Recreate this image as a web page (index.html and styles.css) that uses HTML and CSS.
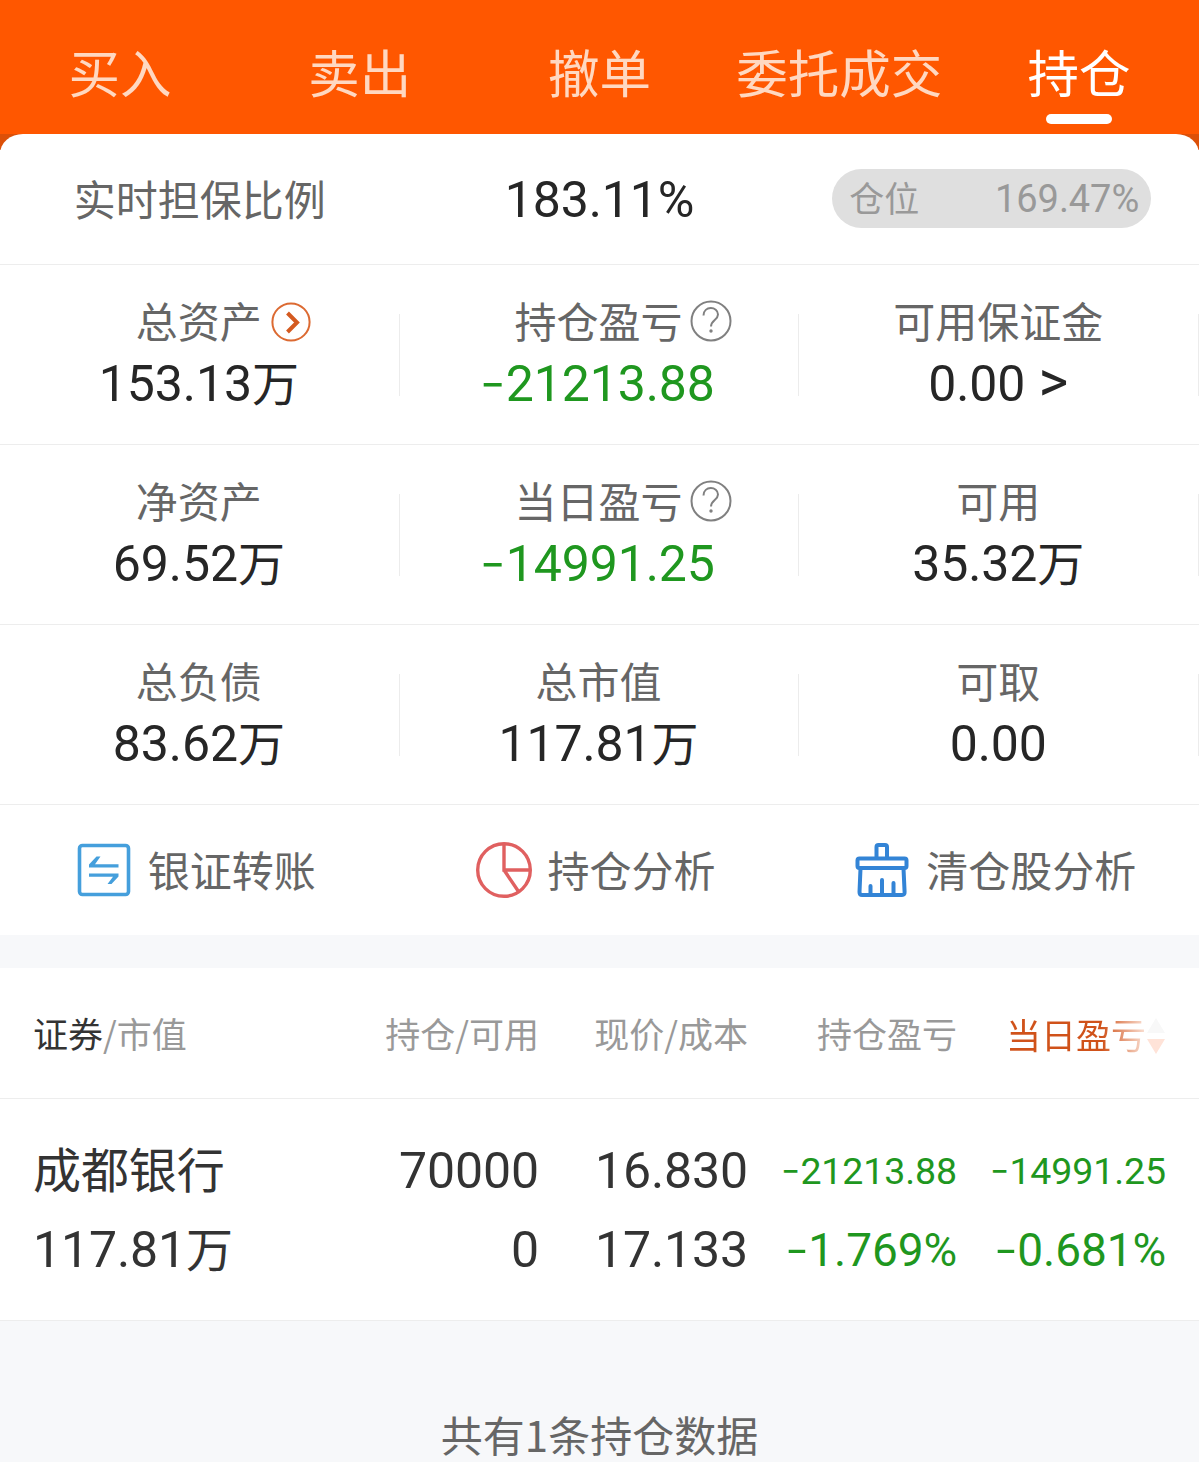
FILE: index.html
```
<!DOCTYPE html>
<html lang="zh-CN">

<head>
    <meta charset="UTF-8">
    <title>持仓</title>
    <link rel="stylesheet" href="styles.css">
</head>

<body>
    <ul class="tabs">
        <li>买入</li>
        <li>卖出</li>
        <li>撤单</li>
        <li>委托成交</li>
        <li class="active">持仓</li>
    </ul>
    <div class="wrap">
        <div class="card">
            <div class="ratio">
                <span class="label">实时担保比例</span>
                <span class="num">183.11%</span>
                <div class="pill"><span>仓位</span><span class="pill-num">169.47%</span></div>
            </div>
            <ul class="row">
                <li>
                    <div class="label">总资产<svg class="arrow" viewBox="0 0 40 40">
                            <circle cx="20" cy="20" r="18.6" />
                            <path d="M16.5 11 L26 20.5 L16.5 30" />
                        </svg></div>
                    <div class="num">153.13<i>万</i></div>
                </li>
                <li>
                    <div class="label">持仓盈亏<svg class="help" viewBox="0 0 42 42">
                            <circle cx="21" cy="21" r="19.5" />
                            <path d="M13.5 15.5 C13.5 5.5 28 6 28 14.5 C28 20 21 20 21 26.5" />
                            <circle class="dot" cx="21" cy="31" r="1.7" />
                        </svg></div>
                    <div class="num green"><b>-</b>21213.88</div>
                </li>
                <li>
                    <div class="label">可用保证金</div>
                    <div class="num">0.00 <i class="gt">&gt;</i></div>
                </li>
            </ul>
            <ul class="row">
                <li>
                    <div class="label">净资产</div>
                    <div class="num">69.52<i>万</i></div>
                </li>
                <li>
                    <div class="label">当日盈亏<svg class="help" viewBox="0 0 42 42">
                            <circle cx="21" cy="21" r="19.5" />
                            <path d="M13.5 15.5 C13.5 5.5 28 6 28 14.5 C28 20 21 20 21 26.5" />
                            <circle class="dot" cx="21" cy="31" r="1.7" />
                        </svg></div>
                    <div class="num green"><b>-</b>14991.25</div>
                </li>
                <li>
                    <div class="label">可用</div>
                    <div class="num">35.32<i>万</i></div>
                </li>
            </ul>
            <ul class="row">
                <li>
                    <div class="label">总负债</div>
                    <div class="num">83.62<i>万</i></div>
                </li>
                <li>
                    <div class="label">总市值</div>
                    <div class="num">117.81<i>万</i></div>
                </li>
                <li>
                    <div class="label">可取</div>
                    <div class="num">0.00</div>
                </li>
            </ul>
            <ul class="actions">
                <li>
                    <svg class="icon transfer" viewBox="0 0 56 56">
                        <rect x="3.5" y="3.5" width="49" height="49" rx="3" />
                        <path class="fill" d="M13 25.5 V22.5 L20.5 14.5 H24.5 L19 22.3 H42.5 V25.5 Z M42.5 31.5 V34.5 L35.5 42 H31.5 L37 34.7 H13 V31.5 Z" />
                    </svg>
                    <span class="label">银证转账</span>
                </li>
                <li>
                    <svg class="icon pie" viewBox="0 0 56 56">
                        <circle cx="28" cy="28" r="26.3" />
                        <path d="M28 2 V28 H54 M28 28 L42.5 49.5" />
                    </svg>
                    <span class="label">持仓分析</span>
                </li>
                <li>
                    <svg class="icon broom" viewBox="0 0 56 56">
                        <path d="M22.5 16 V5 Q22.5 3 24.5 3 H31 Q33 3 33 5 V16" />
                        <rect x="3.5" y="16.5" width="49" height="9.5" rx="2" />
                        <path d="M6.5 26.5 L5.5 50 Q5.5 53 8 53 H48 Q50.8 53 50.6 50 L49.5 26.5 M16.5 52 V44 M28 52 V38 M39.5 52 V41" />
                    </svg>
                    <span class="label">清仓股分析</span>
                </li>
            </ul>
        </div>
    </div>
    <div class="table">
        <div class="thead">
            <span><em>证券</em>/市值</span>
            <span>持仓/可用</span>
            <span>现价/成本</span>
            <span>持仓盈亏</span>
            <span class="sort"><strong>当日盈亏</strong><svg viewBox="0 0 20 38">
                    <path class="up" d="M10 1 L19 16 H1 Z" />
                    <path class="down" d="M1 22 H19 L10 37 Z" />
                </svg></span>
        </div>
        <div class="tbody">
            <div>
                <p class="name">成都银行</p>
                <p>117.81<i>万</i></p>
            </div>
            <div>
                <p>70000</p>
                <p>0</p>
            </div>
            <div>
                <p>16.830</p>
                <p>17.133</p>
            </div>
            <div class="green">
                <p class="small"><b>-</b>21213.88</p>
                <p class="percent"><b>-</b>1.769%</p>
            </div>
            <div class="green">
                <p class="small"><b>-</b>14991.25</p>
                <p class="percent"><b>-</b>0.681%</p>
            </div>
        </div>
    </div>
    <div class="total">共有1条持仓数据</div>
</body>

</html>
```

FILE: styles.css
```
* {
    margin: 0;
    padding: 0;
    box-sizing: border-box;
}

body {
    width: 1199px;
    height: 1462px;
    overflow: hidden;
    background: #f7f8fa;
    font-family: "Noto Sans CJK SC", sans-serif;
    color: #262626;
}

ul {
    list-style: none;
}

i,
em {
    font-style: normal;
}

svg {
    fill: none;
    flex: none;
}

/* 顶部菜单 */
.tabs {
    display: flex;
    height: 134px;
    background: #ff5700;
}

.tabs li {
    flex: 1;
    display: flex;
    flex-direction: column;
    align-items: center;
    padding-top: 31px;
    font-size: 51.5px;
    line-height: 80px;
    color: #ffd8c1;
}

.tabs .active {
    color: #fff;
}

.tabs .active::after {
    content: "";
    width: 66px;
    height: 10px;
    margin-top: 3px;
    border-radius: 5px;
    background: #fff;
}

.wrap {
    background: linear-gradient(#dc5008 16px, #fff 16px);
}

.card {
    background: #fff;
    border-radius: 23px 23px 0 0 / 20px 20px 0 0;
}

.label {
    font-size: 42px;
    color: #666;
}

/* 数字 */
.num,
.pill-num,
.tbody {
    font-family: Roboto, "Noto Sans CJK SC", sans-serif;
    letter-spacing: -.002em;
}

.num {
    padding-top: 4px;
    font-size: 50px;
}

.num i,
.tbody i {
    font-family: "Noto Sans CJK SC", sans-serif;
    font-size: 47px;
    line-height: 1;
}

.num .gt {
    margin-left: 1px;
    font-family: Roboto, sans-serif;
    font-size: 57px;
    line-height: 40px;
}

.green {
    color: #1f971f;
}

/* 负号比字体自带的长一点 */
b {
    display: inline-block;
    font-family: "Noto Sans CJK SC", sans-serif;
    font-weight: normal;
    line-height: 1;
    margin: 0 .08em 0 .045em;
    transform: translateY(-.05em) scaleX(1.4);
}

.ratio {
    display: grid;
    grid-template-columns: repeat(3, 1fr);
    align-items: center;
    justify-items: center;
    height: 131px;
    padding-bottom: 2px;
    border-bottom: 1px solid #ededed;
    line-height: 60px;
}

.pill {
    display: flex;
    justify-content: space-between;
    width: 319px;
    height: 59px;
    margin-right: 15px;
    padding: 0 12px 0 17px;
    border-radius: 30px;
    background: #dfdfdf;
    color: #999;
    font-size: 35px;
    line-height: 56px;
}

.pill-num {
    padding-top: 2px;
    font-size: 38px;
}

.row {
    display: flex;
    height: 180px;
    border-bottom: 1px solid #ededed;
}

.row li {
    flex: 1;
    padding: 25px 2px 0 0;
    text-align: center;
    line-height: 60px;
    background: linear-gradient(#ececec, #ececec) no-repeat right 49px / 1px 82px;
}

.row .label {
    display: flex;
    justify-content: center;
    align-items: center;
    height: 60px;
}

.arrow {
    width: 40px;
    height: 40px;
    margin: 3px -49px 0 9px;
    stroke: #dc6a32;
    stroke-width: 2;
}

.arrow path {
    stroke: #d45a20;
    stroke-width: 4;
}

.help {
    width: 42px;
    height: 42px;
    margin: 2px -49px 0 7px;
    stroke: #808080;
    stroke-width: 2;
}

.help .dot {
    fill: #808080;
    stroke: none;
}

.actions {
    display: flex;
    height: 130px;
}

.actions li {
    flex: 1;
    display: flex;
    justify-content: center;
    align-items: center;
    padding: 0 8px 1px 0;
}

.actions .label {
    line-height: 60px;
    margin: -2px 0 0 16px;
}

.icon {
    width: 56px;
    height: 56px;
}

.transfer {
    stroke: #459fdc;
    stroke-width: 3.6;
}

.transfer .fill {
    fill: #459fdc;
    stroke: none;
}

.pie {
    stroke: #e06060;
    stroke-width: 3.4;
}

.broom {
    stroke: #3384d6;
    stroke-width: 4;
    stroke-linecap: round;
}

/* 持仓列表 */
.table {
    margin-top: 33px;
    background: #fff;
}

.thead,
.tbody {
    display: grid;
    grid-template-columns: 1fr repeat(4, 209px);
    padding: 0 33px;
    text-align: right;
    border-bottom: 1px solid #ededed;
}

.thead {
    height: 131px;
    font-size: 35px;
    line-height: 129px;
    color: #999;
}

.thead em {
    color: #333;
}

.thead > :first-child,
.tbody > :first-child {
    text-align: left;
}

.sort {
    display: flex;
    justify-content: flex-end;
    align-items: center;
}

/* 最后一个字渐隐 */
.sort strong {
    font-weight: normal;
    color: transparent;
    background: linear-gradient(to right, #d0521a 68%, #fff0e8 103%);
    -webkit-background-clip: text;
    background-clip: text;
}

.sort svg {
    width: 20px;
    height: 38px;
    margin-top: 6px;
}

.sort .up {
    fill: #f8f8f8;
}

.sort .down {
    fill: #ffe3d8;
}

.tbody {
    height: 222px;
    padding-top: 33px;
    font-size: 50px;
    line-height: 79px;
    color: #333;
}

.tbody p {
    height: 79px;
}

.tbody .green {
    color: #1f971f;
}

.tbody .name {
    font-family: "Noto Sans CJK SC", sans-serif;
    font-size: 48px;
    line-height: 71px;
}

.tbody .small {
    font-size: 37.5px;
}

.tbody .percent {
    font-size: 46px;
}

.total {
    padding-top: 83px;
    text-align: center;
    font-size: 42px;
    line-height: 60px;
    color: #666;
}
```
